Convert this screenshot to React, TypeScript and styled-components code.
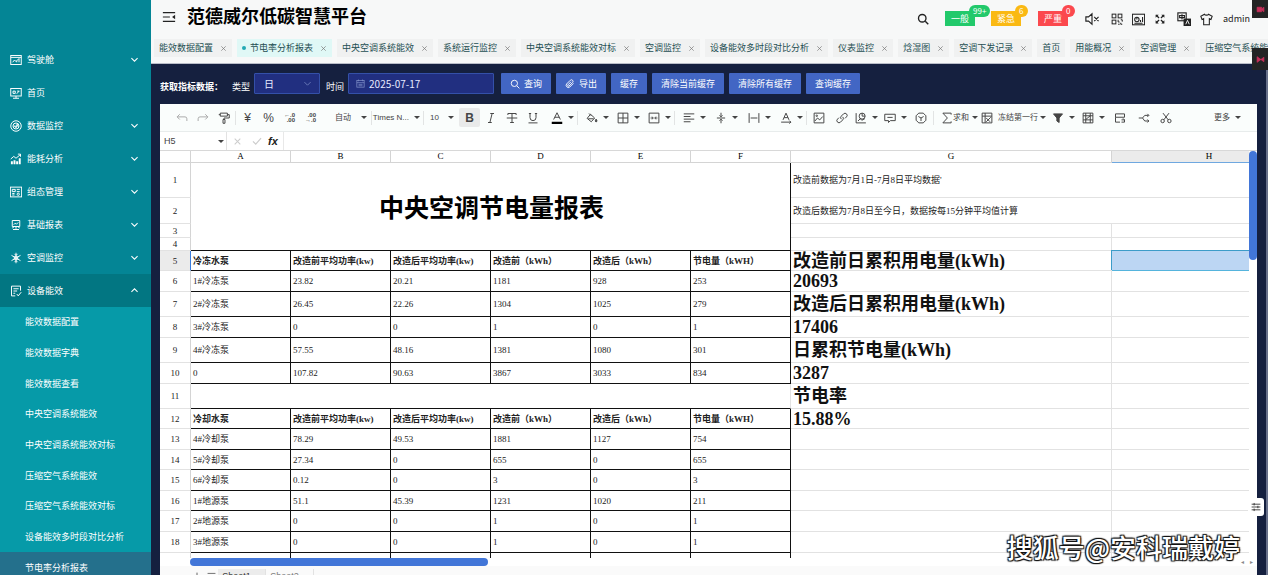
import React from "react";
import styled, { createGlobalStyle, css } from "styled-components";

const sans = `"Liberation Sans", "Noto Sans CJK SC", sans-serif`;
const ui = `"Noto Sans CJK SC", "Noto Sans", sans-serif`;
const serif = `"Liberation Serif", "Noto Sans CJK SC", serif`;

const Global = createGlobalStyle`
  *, *::before, *::after { box-sizing: border-box; }
  body { margin: 0; font: 9px/14px ${ui}; overflow: hidden; }
  button, input, select { font: inherit; color: inherit; margin: 0; padding: 0; border: 0; background: none; }
  ul { list-style: none; margin: 0; padding: 0; }
  a { color: inherit; text-decoration: none; }
  svg { display: block; flex: none; }
`;

/* ---------- icons ---------- */

type IconProps = { name: string; size?: number; stroke?: number };

const shapes: Record<string, React.ReactNode> = {
  cockpit: <><rect x="1" y="2" width="14" height="12" /><path d="M1 4.5h14M3.5 11l2.5-3 2 2 4-4M12 6v5M9 11V9" /></>,
  home: <><rect x="1" y="2" width="14" height="10" /><path d="M4 15h8M8 12v3M4 5.5h3v3H4zM9 9l3-3.500M9.500 5.500h3" /></>,
  monitor: <><circle cx="8" cy="8" r="7" /><circle cx="8" cy="8" r="4" /><path d="M5 9.500l1.500-2 1.500 3 1.500-5 1.500 4" /></>,
  energy: <><path d="M2.500 15v-4M6 15V9.500M9.500 15v-4M13 15V7" strokeWidth="2.600" /><path d="M1 8l4-3.500 3 2.500 6-5M10.500 1.500H14V5" /></>,
  config: <><rect x="0.500" y="1.500" width="15" height="13" /><path d="M3 4.500h4v3H3zM9 4.500h4M9 7.500h4M3 10h3M3 12h3" /><circle cx="11" cy="11" r="1.500" /></>,
  report: <><path d="M3 2h10v8H3zM8 10v3M4 14h8M5 7.500l2-2 1.500 1.500L11 4.500" /><path d="M3 12l3-2M13 12l-3-2" /></>,
  snow: <><path d="M8 1v14M2 4.500l12 7M14 4.500l-12 7M6 2.500l2 2 2-2M6 13.500l2-2 2 2" /><circle cx="8" cy="8" r="2.500" /></>,
  device: <><path d="M7 14.500H2v-13h12v6M4.500 5h7M4.500 8h5M4.500 11H7M9 12l2 2.500 4-5" /></>,
  down: <path d="M2.500 5.500L8 11l5.500-5.500" />,
  up: <path d="M2.500 10.500L8 5l5.500 5.500" />,
  fold: <><path d="M1 3h14M1 8h8M1 13h14" /><path d="M15 5.500v5L11.500 8z" fill="currentColor" stroke="none" /></>,
  search: <><circle cx="7" cy="7" r="5" /><path d="M11 11l4 4" /></>,
  mute: <><path d="M1 5.500h3l4-3.500v12l-4-3.500H1zM10.500 5.500l5 5M15.500 5.500l-5 5" /></>,
  qr: <><rect x="1.500" y="1.500" width="5" height="5" /><rect x="9.500" y="1.500" width="5" height="5" /><rect x="1.500" y="9.500" width="5" height="5" /><path d="M9.500 9v3h2M13 9h2v2.500M9.500 15h2M13 13v2h2" /></>,
  screen: <><rect x="0.500" y="1.500" width="15" height="13" /><circle cx="6" cy="8" r="2.700" /><path d="M6 8V5.300M10.500 11V8.500M13 11V5M3 12.500h10" /></>,
  full: <><path d="M2 2l4.500 4.500M14 2L9.500 6.500M2 14l4.500-4.500M14 14l-4.500-4.500" strokeWidth="2" /><path d="M1 1h5L1 6zM15 1v5l-5-5zM1 15v-5l5 5zM15 15h-5l5-5z" fill="currentColor" stroke="none" /></>,
  lang: <><rect x="1" y="1" width="9.500" height="9" /><path d="M3 4h5.500v2.500H3zM5.700 2.500v6" /><rect x="7.500" y="7.500" width="8.500" height="8.500" fill="currentColor" stroke="none" /><path d="M10 14l2-4.500 2 4.500" stroke="#fff" strokeWidth="1" /></>,
  shirt: <path d="M5.500 1.500L1 4l1.500 4 2-1v7.500h7V7l2 1L15 4l-4.500-2.500C10 3 6 3 5.500 1.500z" />,
  calendar: <><rect x="1.500" y="2.500" width="13" height="12" /><path d="M1.500 6.500h13M4.500 1v3M11.500 1v3M4.500 9.500h7M4.500 12h7" /></>,
  clip: <path d="M13.500 7l-6 6a3.600 3.600 0 0 1-5-5l6-6a2.500 2.500 0 0 1 3.600 3.600l-5.600 5.600a1.200 1.200 0 0 1-1.800-1.800l5-5" />,
  undo: <path d="M5 3L1.500 6.500 5 10M1.500 6.500H12a2.500 2.500 0 0 1 2.500 2.500v3" />,
  redo: <path d="M11 3l3.500 3.500L11 10M14.500 6.500H4A2.500 2.500 0 0 0 1.500 9v3" />,
  paint: <path d="M3 1.500h9.500v4H3zM12.500 3.500h2.500V8H8v2M6.700 10h2.600v5H6.700zM3 3.500H1" />,
  strike: <path d="M2.500 4V2h11v2M8 2v12M5.500 14h5M1 8h14" />,
  underline: <path d="M4 2v5.500a4 4 0 0 0 8 0V2M2.500 2h3M10.500 2h3M2 14.500h12" />,
  italic: <path d="M7 2h5M4 14h5M9.500 2l-3 12" />,
  fontcolor: <><path d="M3.500 10L8 1l4.500 9M5 7h6" /><path d="M1 14.500h14" stroke="#000" strokeWidth="3" /></>,
  fill: <><path d="M6 3l5.500 5-4.500 5-5.500-4.500zM4 2l3 3" /><path d="M3 9h7" /><path d="M13.500 9.500c1.500 2 1.500 3.500 0 3.500s-1.500-1.500 0-3.500z" fill="currentColor" /></>,
  border: <path d="M1.500 1.500h13v13h-13zM8 1.500v13M1.500 8h13" />,
  merge: <><path d="M1.500 1.500h13v13h-13zM3.500 8h3M12.500 8h-3M5.500 6.200L7 8 5.500 9.800M10.500 6.200L9 8l1.500 1.800" /></>,
  align: <path d="M1 2.500h14M1 6h9M1 9.500h14M1 13h9" />,
  valign: <path d="M2.500 8h11M8 1v5M6 4.500l2 2 2-2M8 15v-5M6 11.500l2-2 2 2" />,
  wrap: <path d="M1.500 1.500v13M14.500 1.500v13M3.500 8h9" />,
  rotate: <path d="M4 10.500L8 1.500l4 9M5.500 7.500h5M1.500 13.500h13M12.500 11.500l2 2-2 2" />,
  image: <><path d="M1.500 1.500h13v13h-13zM2.500 12l3.500-4 3 2.500 4-4.500" /><circle cx="5" cy="5" r="1" /></>,
  link: <path d="M7 9.500a3 3 0 0 1 0-4l3-3a2.800 2.800 0 0 1 4 4l-2 2M9 6.500a3 3 0 0 1 0 4l-3 3a2.800 2.800 0 0 1-4-4l2-2" />,
  chart: <><path d="M1.500 1.500v13h13M4 12l3-3 2 2 4-2" /><circle cx="9.500" cy="5.500" r="4" /><path d="M9.500 5.500V1.500M9.500 5.500h4" /></>,
  comment: <path d="M1 3h14v8.500H8.500L6 14v-2.500H1zM4.500 7.200h7" />,
  cube: <><path d="M5 1.500h6L14.500 5v6L11 14.500H5L1.500 11V5zM8 8v4M8 8L4.500 6M8 8l3.500-2" /></>,
  sum: <path d="M13.500 3.500v-2h-11L8.500 8l-6 6.500h11v-2" />,
  freeze: <path d="M1.500 1.500h13v13h-13zM5.500 1.500v13M1.500 5.500h13M7 13l6-6M7 8l5 5" />,
  filter: <path d="M2 2.500h12L9.500 8v6L6.500 12V8z" fill="currentColor" />,
  cond: <path d="M1.500 1.500h13v13h-13zM1.500 5h13M1.500 10.500h13M5 1.500v13M11 1.500v13M5 10l6-5" />,
  split: <path d="M14 7H2V2.500h12V7M2 7v6.500h6M10 10.500h4M12 8.500l2 2v3h-4" />,
  branch: <path d="M1 8h5l3-3.500h5M6 8l3 4h5M12.500 2.500l2 2-2 2M12.500 10l2 2-2 2" />,
  scissors: <><circle cx="3.500" cy="12" r="2.300" /><circle cx="12.500" cy="12" r="2.300" /><path d="M5 10.500L12 1.500M11 10.500L4 1.500" /></>,
  close: <path d="M3 3l10 10M13 3L3 13" />,
  check: <path d="M1.500 8.500L6 13l8.500-9.500" />,
  sliders: <path d="M1 3.500h14M1 8h14M1 12.500h14M5 1.500v4M11 6v4M5 10.500v4" />,
  plus: <path d="M8 1v14M1 8h14" />,
  list: <path d="M1 2.500h14M1 8h14M1 13.500h14" />,
  flag: <path d="M2 3l12 9V4L2 13z" fill="currentColor" />,
  camera: <path d="M2 4h8v8H2zM10 7l4-3v8l-4-3z" fill="currentColor" />,
};

const Icon = ({ name, size = 12, stroke = 1.3 }: IconProps) => (
  <svg width={size} height={size} viewBox="0 0 16 16" fill="none" stroke="currentColor" strokeWidth={stroke} aria-hidden="true">
    {shapes[name]}
  </svg>
);

const DecimalIcon = styled.span`
  display: grid;
  font: bold 6px/5px ${sans};
  text-align: right;
`;

/* ---------- layout ---------- */

const Page = styled.div`
  display: flex;
  height: 100vh;
  overflow: hidden;
  position: relative;
`;

const Sidebar = styled.nav`
  flex: none;
  width: 151px;
  padding-top: 43px;
  overflow: hidden;
  color: #fff;
  background: #048595;
`;

const MenuLink = styled.a<{ $open?: boolean }>`
  display: flex;
  align-items: center;
  gap: 5px;
  height: 33px;
  padding: 0 12px 0 10px;
  background: ${(p) => (p.$open ? "#027682" : "transparent")};
  span { flex: 1; }
`;

const SubMenu = styled.ul`
  display: flex;
  flex-direction: column;
  height: 276px;
  background: #069aa8;
  li { flex: 1; display: flex; }
`;

const SubLink = styled.a<{ $active?: boolean }>`
  flex: 1;
  display: flex;
  align-items: center;
  padding-left: 25px;
  background: ${(p) => (p.$active ? "#24708c" : "transparent")};
`;

const Main = styled.div`
  flex: 1;
  min-width: 0;
  display: flex;
  flex-direction: column;
  background: #15203f;
`;

const Header = styled.header`
  flex: none;
  height: 64px;
  background: #f7f8f8;
  border-bottom: 1px solid #b9bdc8;
  overflow: hidden;
`;

const TitleRow = styled.div`
  display: flex;
  align-items: center;
  height: 39px;
  padding: 0 18px 6px 11px;
  color: #222;
`;

const IconButton = styled.button<{ $w?: number }>`
  display: flex;
  align-items: center;
  justify-content: center;
  width: ${(p) => p.$w ?? 14}px;
  height: 20px;
`;

const Title = styled.h1`
  margin: 0 auto 0 11px;
  padding-bottom: 3px;
  font: bold 18px/26px ${ui};
  color: #000;
`;

const Alerts = styled.div`
  display: flex;
  gap: 16px;
  margin: 0 11px 0 15px;
`;

const Alert = styled.button<{ $color: string }>`
  position: relative;
  width: 30px;
  height: 15px;
  margin-top: 4px;
  color: #fff;
  background: ${(p) => p.$color};
  sup {
    position: absolute;
    top: -6px;
    left: 24px;
    min-width: 12px;
    height: 12px;
    padding: 0 4px;
    border-radius: 6px;
    font: 8px/12px ${ui};
    background: ${(p) => p.$color};
  }
`;

const Tools = styled.div`
  display: flex;
  align-items: center;
  padding-top: 5px;
`;

const User = styled.a`
  margin-left: 5px;
  font: 9px/14px ${ui};
`;

const Tabs = styled.div`
  display: flex;
  gap: 5px;
  padding-left: 3px;
`;

const Tab = styled.div<{ $active?: boolean }>`
  flex: none;
  display: flex;
  align-items: center;
  height: 18px;
  padding: 0 5px;
  color: #244e52;
  background: ${(p) => (p.$active ? "#e0f8f6" : "#f0f1f1")};
  ${(p) =>
    p.$active &&
    css`
      &::before {
        content: "";
        width: 4px;
        height: 4px;
        margin-right: 4px;
        border-radius: 50%;
        background: #22a9b4;
      }
    `}
  button { display: flex; margin-left: 7px; color: #777; }
`;

const Workspace = styled.main`
  flex: 1;
  min-height: 0;
  display: flex;
  flex-direction: column;
  padding: 0 9px;
  border-right: 2px solid #67708a;
`;

const Filters = styled.form`
  flex: none;
  display: flex;
  align-items: flex-end;
  height: 40px;
  padding-bottom: 10px;
  color: #fff;
`;

const Label = styled.label<{ $left?: number }>`
  margin: 0 4px 0 ${(p) => p.$left ?? 0}px;
`;

const Caption = styled.strong`
  width: 68px;
  white-space: nowrap;
`;

const Field = styled.div<{ $w: number }>`
  display: flex;
  align-items: center;
  justify-content: space-between;
  gap: 4px;
  width: ${(p) => p.$w}px;
  height: 21px;
  padding: 0 7px;
  border: 1px solid #3450a8;
  border-radius: 1px;
  background: #212f80;
  color: #e6eaff;
  svg { color: #8090c8; }
  select, input { flex: 1; min-width: 0; appearance: none; outline: 0; font-size: 10px; }
  select { padding-left: 2px; }
`;

const Actions = styled.div`
  display: flex;
  gap: 5px;
  margin-left: 7px;
`;

const Action = styled.button`
  display: flex;
  align-items: center;
  gap: 4px;
  height: 21px;
  padding: 0 9px;
  border-radius: 1px;
  color: #fff;
  background: #4266c4;
`;

/* ---------- spreadsheet ---------- */

const Sheet = styled.section`
  flex: 1;
  min-height: 0;
  display: flex;
  flex-direction: column;
  margin-bottom: -9px;
  background: #fff;
  color: #444;
  overflow: hidden;
`;

const ToolBar = styled.div`
  flex: none;
  display: flex;
  align-items: center;
  height: 28px;
  padding: 0 14px 0 11px;
  border-bottom: 1px solid #e8ecec;
  background: #fafdfc;
  font: 8px/14px ${sans};
`;

const Tool = styled.button<{ $w: number; $on?: boolean; $dim?: boolean }>`
  flex: none;
  display: flex;
  align-items: center;
  justify-content: center;
  width: ${(p) => p.$w}px;
  height: 19px;
  border-radius: 2px;
  color: ${(p) => (p.$dim ? "#aaa" : "#444")};
  background: ${(p) => (p.$on ? "#e9eaea" : "transparent")};
`;

const DropTool = styled(Tool)<{ $text?: boolean }>`
  justify-content: flex-end;
  gap: 5px;
  padding-right: 2px;
  white-space: nowrap;
  span { margin-right: ${(p) => (p.$text ? "auto" : "0")}; }
`;

const Caret = styled.i`
  flex: none;
  border: 3px solid transparent;
  border-top-color: currentColor;
  border-bottom-width: 0;
`;

const Sep = styled.i`
  flex: none;
  width: 1px;
  height: 14px;
  margin: 0 1px;
  background: #e2e4e4;
`;

const Glyph = styled.span<{ $bold?: boolean }>`
  font: ${(p) => (p.$bold ? "bold" : "normal")} 12px/14px ${sans};
`;

const FormulaBar = styled.div`
  flex: none;
  display: flex;
  height: 18px;
  align-items: stretch;
  font: 9px/14px ${sans};
`;

const NameBox = styled.label`
  display: flex;
  align-items: center;
  width: 67px;
  padding: 0 2px 0 4px;
  border-right: 1px solid #e2e2e2;
  input { flex: 1; min-width: 0; outline: 0; }
`;

const FormulaTools = styled.div`
  display: flex;
  align-items: center;
  width: 57px;
  padding-left: 1px;
  border-right: 1px solid #e8e8e8;
  color: #ccc;
  em { margin-left: 2px; color: #222; font: italic bold 11px/14px ${sans}; }
`;

const FormulaInput = styled.input`
  flex: 1;
  min-width: 0;
  outline: 0;
`;

const GridArea = styled.div`
  flex: 1;
  min-height: 0;
  display: grid;
  grid-template-columns: 1fr 8px;
  border-top: 1px solid #d8d8d8;
`;

const GridView = styled.div`
  min-width: 0;
  overflow: hidden;
`;

const VScroll = styled.div`
  &::before {
    content: "";
    display: block;
    height: 109px;
    border-radius: 4px;
    background: #4276d8;
  }
`;

const HScroll = styled.div`
  flex: none;
  display: flex;
  justify-content: space-between;
  height: 8px;
  padding-left: 30px;
  color: #888;
  &::before {
    content: "";
    width: 298px;
    border-radius: 4px;
    background: #4276d8;
  }
`;

const ScrollEnds = styled.span`
  display: flex;
  gap: 6px;
  padding-right: 4px;
  font: 6px/8px ${sans};
`;

const Table = styled.table`
  width: 1147px;
  table-layout: fixed;
  border-collapse: separate;
  border-spacing: 0;
  font: 9px/12px ${serif};
  color: #222;
  th, td { padding: 0; overflow: hidden; white-space: nowrap; }
`;

const ColHead = styled.th<{ $on?: boolean }>`
  height: 12px;
  font-weight: normal;
  line-height: 11px;
  color: #000;
  border-right: 1px solid #d4d4d4;
  border-bottom: 1px solid ${(p) => (p.$on ? "#6fa8e0" : "#d4d4d4")};
  background: ${(p) => (p.$on ? "#ebebeb" : "#fff")};
`;

const RowHead = styled.th<{ $on?: boolean }>`
  font-weight: normal;
  border-right: 1px solid ${(p) => (p.$on ? "#3b7ddd" : "#d4d4d4")};
  border-bottom: 1px solid #e2e2e2;
  background: ${(p) => (p.$on ? "#ebebeb" : "#fff")};
`;

const Row = styled.tr<{ $h: number }>`
  height: ${(p) => p.$h}px;
`;

const Cell = styled.td<{ $framed?: boolean; $bold?: boolean }>`
  && { padding-left: 2px; }
  border-right: 1px solid ${(p) => (p.$framed ? "#111" : "#e2e2e2")};
  border-bottom: 1px solid ${(p) => (p.$framed ? "#111" : "#e2e2e2")};
  font-weight: ${(p) => (p.$bold ? "bold" : "normal")};
`;

const TitleCell = styled(Cell)`
  && { padding-top: 4px; }
  font: bold 25px/36px ${serif};
  text-align: center;
  color: #000;
`;

const GapCell = styled(Cell)`
  border-bottom-color: #111;
`;

const TotalCell = styled(Cell)`
  font: bold 18px/18px ${serif};
  color: #111;
`;

const PickedCell = styled(Cell)`
  background: #bcd6f3;
  border-bottom-color: #55b4dd;
  box-shadow: -1px -1px 0 #3c9cc8;
`;

const SheetTabs = styled.div`
  flex: none;
  display: flex;
  align-items: center;
  height: 18px;
  padding: 3px 0 0 30px;
  background: #fafafa;
  font: 9px/15px ${sans};
`;

const SheetTab = styled.button<{ $on?: boolean }>`
  display: flex;
  align-items: center;
  justify-content: center;
  gap: 4px;
  width: 48px;
  height: 15px;
  border-right: 1px solid #e2e2e2;
  color: ${(p) => (p.$on ? "#333" : "#777")};
  background: ${(p) => (p.$on ? "#ececec" : "transparent")};
`;

const EdgeButton = styled.button<{ $top: number; $h: number }>`
  position: absolute;
  right: 0;
  top: ${(p) => p.$top}px;
  display: flex;
  align-items: center;
  justify-content: center;
  width: 16px;
  height: ${(p) => p.$h}px;
  color: #c92f5b;
  background: #242424;
`;

const SettingsButton = styled.button`
  position: absolute;
  right: 4px;
  top: 498px;
  display: flex;
  align-items: center;
  justify-content: center;
  width: 16px;
  height: 18px;
  border-radius: 3px;
  color: #222;
  background: #fff;
`;

const Watermark = styled.div`
  position: absolute;
  right: 28px;
  bottom: 10px;
  font: 500 26px/36px ${ui};
  color: #fff;
  text-shadow: 1px 1px 1px #111, -1px 1px 1px #111, 1px -1px 1px #111, -1px -1px 1px #111;
`;

/* ---------- data ---------- */

const menu = [
  ["cockpit", "驾驶舱", "down"],
  ["home", "首页", ""],
  ["monitor", "数据监控", "down"],
  ["energy", "能耗分析", "down"],
  ["config", "组态管理", "down"],
  ["report", "基础报表", "down"],
  ["snow", "空调监控", "down"],
  ["device", "设备能效", "up"],
];

const subMenu = [
  "能效数据配置", "能效数据字典", "能效数据查看", "中央空调系统能效", "中央空调系统能效对标",
  "压缩空气系统能效", "压缩空气系统能效对标", "设备能效多时段对比分析", "节电率分析报表",
];

const tabs = [
  "能效数据配置", "节电率分析报表", "中央空调系统能效", "系统运行监控", "中央空调系统能效对标", "空调监控",
  "设备能效多时段对比分析", "仪表监控", "焓湿图", "空调下发记录", "首页", "用能概况", "空调管理", "压缩空气系统能效",
];

const alerts = [
  ["一般", "99+", "#22c96b"],
  ["紧急", "6", "#fab913"],
  ["严重", "0", "#fb494e"],
];

const headTools: [string, string, number, number][] = [
  ["mute", "静音", 14, 26],
  ["qr", "二维码", 12, 24],
  ["screen", "大屏", 13, 18],
  ["full", "全屏", 10, 26],
  ["lang", "语言", 14, 22],
  ["shirt", "主题", 13, 23],
];

const pumpHead = (name: string) => [name, "改造前平均功率(kw)", "改造后平均功率(kw)", "改造前（kWh）", "改造后（kWh）", "节电量（kWH）"];

type RowData = { n: number; h: number; cells?: string[]; head?: boolean; total?: string };

const rows: RowData[] = [
  { n: 5, h: 20, cells: pumpHead("冷冻水泵"), head: true, total: "改造前日累积用电量(kWh)" },
  { n: 6, h: 21, cells: ["1#冷冻泵", "23.82", "20.21", "1181", "928", "253"], total: "20693" },
  { n: 7, h: 25, cells: ["2#冷冻泵", "26.45", "22.26", "1304", "1025", "279"], total: "改造后日累积用电量(kWh)" },
  { n: 8, h: 21, cells: ["3#冷冻泵", "0", "0", "1", "0", "1"], total: "17406" },
  { n: 9, h: 25, cells: ["4#冷冻泵", "57.55", "48.16", "1381", "1080", "301"], total: "日累积节电量(kWh)" },
  { n: 10, h: 21, cells: ["0", "107.82", "90.63", "3867", "3033", "834"], total: "3287" },
  { n: 11, h: 25, total: "节电率" },
  { n: 12, h: 20, cells: pumpHead("冷却水泵"), head: true, total: "15.88%" },
  { n: 13, h: 21, cells: ["4#冷却泵", "78.29", "49.53", "1881", "1127", "754"] },
  { n: 14, h: 20, cells: ["5#冷却泵", "27.34", "0", "655", "0", "655"] },
  { n: 15, h: 21, cells: ["6#冷却泵", "0.12", "0", "3", "0", "3"] },
  { n: 16, h: 20, cells: ["1#地源泵", "51.1", "45.39", "1231", "1020", "211"] },
  { n: 17, h: 21, cells: ["2#地源泵", "0", "0", "1", "0", "1"] },
  { n: 18, h: 21, cells: ["3#地源泵", "0", "0", "1", "0", "1"] },
];

/* ---------- parts ---------- */

const AlertSlot = styled.div<{ $last: boolean }>`
  padding-left: ${(p) => (p.$last ? 1 : 0)}px;
`;

const AutoTool = styled(DropTool)`padding-left: 14px; padding-right: 3px;`;
const FontTool = styled(DropTool)`padding-left: 3px;`;
const SizeTool = styled(DropTool)`margin-right: 3px; padding-left: 5px;`;
const MoreTool = styled(DropTool)`margin-left: auto;`;
const SumTool = styled(DropTool)`gap: 3px; svg { margin-right: -3px; }`;
const FreezeTool = styled(DropTool)`gap: 2px; svg { margin-right: 3px; }`;

const Drop = ({ icon, w, label }: { icon: string; w: number; label: string }) => (
  <DropTool type="button" $w={w} aria-label={label}>
    <Icon name={icon} />
    <Caret />
  </DropTool>
);

const One = ({ icon, w, label, dim }: { icon: string; w: number; label: string; dim?: boolean }) => (
  <Tool type="button" $w={w} $dim={dim} aria-label={label}>
    <Icon name={icon} />
  </Tool>
);

const SheetToolBar = () => (
  <ToolBar>
    <One icon="undo" w={21} label="撤销" dim />
    <One icon="redo" w={21} label="重做" dim />
    <One icon="paint" w={21} label="格式刷" />
    <Sep />
    <Tool type="button" $w={21}><Glyph>¥</Glyph></Tool>
    <Tool type="button" $w={21}><Glyph>%</Glyph></Tool>
    <Tool type="button" $w={21}><DecimalIcon><span>←.0</span><span>.00</span></DecimalIcon></Tool>
    <Tool type="button" $w={21}><DecimalIcon><span>.00</span><span>→.0</span></DecimalIcon></Tool>
    <AutoTool type="button" $w={49} $text><span>自动</span><Caret /></AutoTool>
    <Sep />
    <FontTool type="button" $w={49} $text><span>Times N...</span><Caret /></FontTool>
    <Sep />
    <SizeTool type="button" $w={31} $text><span>10</span><Caret /></SizeTool>
    <Tool type="button" $w={21} $on><Glyph $bold>B</Glyph></Tool>
    <One icon="italic" w={21} label="斜体" />
    <One icon="strike" w={21} label="删除线" />
    <One icon="underline" w={21} label="下划线" />
    <Drop icon="fontcolor" w={33} label="字体颜色" />
    <Sep />
    <Drop icon="fill" w={32} label="填充颜色" />
    <Drop icon="border" w={31} label="边框" />
    <Drop icon="merge" w={31} label="合并" />
    <Sep />
    <Drop icon="align" w={32} label="水平对齐" />
    <Drop icon="valign" w={32} label="垂直对齐" />
    <Drop icon="wrap" w={33} label="换行" />
    <Drop icon="rotate" w={32} label="旋转" />
    <Sep />
    <One icon="image" w={22} label="图片" />
    <One icon="link" w={23} label="链接" />
    <Drop icon="chart" w={27} label="图表" />
    <Drop icon="comment" w={29} label="批注" />
    <One icon="cube" w={23} label="透视表" />
    <Sep />
    <SumTool type="button" $w={45}><Icon name="sum" /><span>求和</span><Caret /></SumTool>
    <FreezeTool type="button" $w={68}><Icon name="freeze" /><span>冻结第一行</span><Caret /></FreezeTool>
    <Drop icon="filter" w={29} label="筛选" />
    <Drop icon="cond" w={30} label="条件格式" />
    <One icon="split" w={25} label="分列" />
    <One icon="branch" w={23} label="数据验证" />
    <One icon="scissors" w={22} label="截图" />
    <MoreTool type="button" $w={30}><span>更多</span><Caret /></MoreTool>
  </ToolBar>
);

const Grid = () => (
  <Table>
    <colgroup>
      <col width="31" />
      {["A", "B", "C", "D", "E", "F"].map((c) => <col key={c} width="100" />)}
      <col width="321" />
      <col width="195" />
    </colgroup>
    <thead>
      <tr>
        <ColHead aria-label="全选" />
        {["A", "B", "C", "D", "E", "F", "G", "H"].map((c) => (
          <ColHead key={c} scope="col" $on={c === "H"}>{c}</ColHead>
        ))}
      </tr>
    </thead>
    <tbody>
      <Row $h={35}>
        <RowHead scope="row">1</RowHead>
        <TitleCell colSpan={6} rowSpan={4} $framed>中央空调节电量报表</TitleCell>
        <Cell colSpan={2}>改造前数据为7月1日-7月8日平均数据'</Cell>
      </Row>
      <Row $h={26}>
        <RowHead scope="row">2</RowHead>
        <Cell colSpan={2}>改造后数据为7月8日至今日，数据按每15分钟平均值计算</Cell>
      </Row>
      <Row $h={14}><RowHead scope="row">3</RowHead><Cell /><Cell /></Row>
      <Row $h={13}><RowHead scope="row">4</RowHead><Cell /><Cell /></Row>
      {rows.map((r) => (
        <Row key={r.n} $h={r.h}>
          <RowHead scope="row" $on={r.n === 5}>{r.n}</RowHead>
          {r.cells ? r.cells.map((c, i) => <Cell key={i} $framed $bold={r.head}>{c}</Cell>) : <GapCell colSpan={6} />}
          <TotalCell>{r.total}</TotalCell>
          {r.n === 5 ? <PickedCell /> : <Cell />}
        </Row>
      ))}
      <Row $h={20}>
        <RowHead scope="row" aria-label="19" />
        {[0, 1, 2, 3, 4, 5].map((i) => <Cell key={i} $framed />)}
        <Cell />
        <Cell />
      </Row>
    </tbody>
  </Table>
);

export default function App() {
  return (
    <Page>
      <Global />
      <Sidebar>
        <ul>
          {menu.map(([icon, text, arrow]) => (
            <li key={text}>
              <MenuLink href="#" $open={arrow === "up"}>
                <Icon name={icon} />
                <span>{text}</span>
                {arrow && <Icon name={arrow} size={9} stroke={1.8} />}
              </MenuLink>
            </li>
          ))}
        </ul>
        <SubMenu>
          {subMenu.map((t, i) => (
            <li key={t}><SubLink href="#" $active={i === 8}>{t}</SubLink></li>
          ))}
        </SubMenu>
      </Sidebar>

      <Main>
        <Header>
          <TitleRow>
            <IconButton aria-label="收起菜单"><Icon name="fold" size={14} stroke={1.2} /></IconButton>
            <Title>范德威尔低碳智慧平台</Title>
            <Tools>
              <IconButton aria-label="搜索"><Icon name="search" stroke={1.8} /></IconButton>
            </Tools>
            <Alerts>
              {alerts.map(([t, n, c], i) => (
                <AlertSlot key={t} $last={i === 2}><Alert $color={c}>{t}<sup>{n}</sup></Alert></AlertSlot>
              ))}
            </Alerts>
            <Tools>
              {headTools.map(([n, label, size, w]) => (
                <IconButton key={n} $w={w} aria-label={label}><Icon name={n} size={size} stroke={1.3} /></IconButton>
              ))}
              <User href="#">admin</User>
            </Tools>
          </TitleRow>
          <Tabs>
            {tabs.map((t, i) => (
              <Tab key={t + i} $active={i === 1}>
                <a href="#">{t}</a>
                {t !== "首页" && <button aria-label="关闭"><Icon name="close" size={7} stroke={1.6} /></button>}
              </Tab>
            ))}
          </Tabs>
        </Header>

        <Workspace>
          <Filters onSubmit={(e) => e.preventDefault()}>
            <Caption>获取指标数据：</Caption>
            <Label htmlFor="kind" $left={4}>类型</Label>
            <Field $w={66}>
              <select id="kind" defaultValue="日"><option>日</option></select>
              <Icon name="down" size={9} />
            </Field>
            <Label htmlFor="date" $left={6}>时间</Label>
            <Field $w={146}>
              <Icon name="calendar" size={9} />
              <input id="date" defaultValue="2025-07-17" />
            </Field>
            <Actions>
              <Action><Icon name="search" size={10} stroke={1.5} />查询</Action>
              <Action type="button"><Icon name="clip" size={10} stroke={1.5} />导出</Action>
              <Action type="button">缓存</Action>
              <Action type="button">清除当前缓存</Action>
              <Action type="button">清除所有缓存</Action>
              <Action type="button">查询缓存</Action>
            </Actions>
          </Filters>

          <Sheet>
            <SheetToolBar />
            <FormulaBar>
              <NameBox><input aria-label="单元格" defaultValue="H5" /><Caret /></NameBox>
              <FormulaTools>
                <IconButton $w={19} aria-label="取消"><Icon name="close" size={9} stroke={1.8} /></IconButton>
                <IconButton $w={19} aria-label="确认"><Icon name="check" size={10} stroke={1.8} /></IconButton>
                <em>fx</em>
              </FormulaTools>
              <FormulaInput aria-label="公式" />
            </FormulaBar>
            <GridArea>
              <GridView><Grid /></GridView>
              <VScroll />
            </GridArea>
            <HScroll><ScrollEnds><span>◂</span><span>▸</span></ScrollEnds></HScroll>
            <SheetTabs>
              <IconButton aria-label="新增工作表"><Icon name="plus" size={10} /></IconButton>
              <IconButton aria-label="工作表列表"><Icon name="list" size={9} /></IconButton>
              <SheetTab $on>Sheet1<Caret /></SheetTab>
              <SheetTab>Sheet2<Caret /></SheetTab>
            </SheetTabs>
          </Sheet>
        </Workspace>
      </Main>

      <EdgeButton $top={0} $h={18} aria-label="录制"><Icon name="camera" size={9} /></EdgeButton>
      <EdgeButton $top={48} $h={22} aria-label="标注"><Icon name="flag" size={9} /></EdgeButton>
      <SettingsButton aria-label="设置"><Icon name="sliders" size={10} /></SettingsButton>
      <Watermark>搜狐号@安科瑞戴婷</Watermark>
    </Page>
  );
}
